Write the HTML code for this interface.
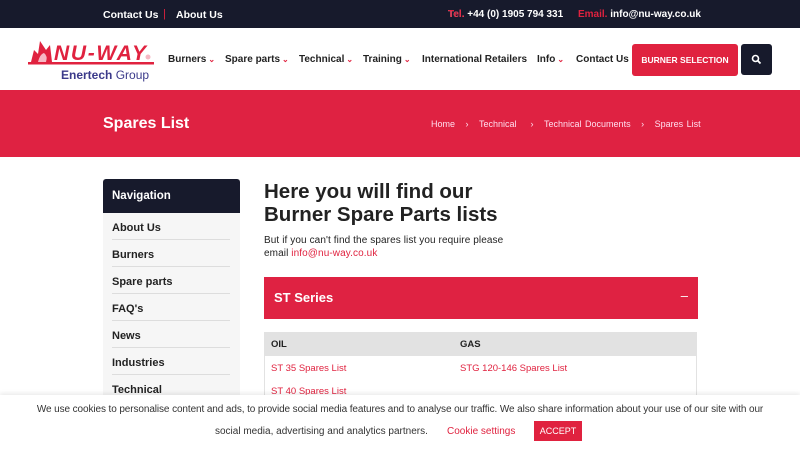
<!DOCTYPE html>
<html><head><meta charset="utf-8"><style>
*{margin:0;padding:0;box-sizing:border-box}
body{width:800px;height:450px;overflow:hidden;font-family:"Liberation Sans",Arial,sans-serif;background:#fff;position:relative;color:#222}
.a{position:absolute;white-space:nowrap}
.top{left:0;top:0;width:800px;height:28px;background:#171a2c}
.w{color:#fff;font-weight:bold;font-size:10.5px}
.r{color:#e0223f}
.nav{font-weight:bold;font-size:10px;color:#222;top:54px}
.nav i{color:#e0223f;font-style:normal;font-size:8px;margin-left:2px}
.ban{left:0;top:90px;width:800px;height:67px;background:#df2242}
.side{left:103px;top:179px;width:137px;height:230px;background:#f6f6f6}
.side .h{position:absolute;left:0;top:0;width:137px;height:34px;background:#171a2c;border-radius:3px 3px 0 0;color:#fff;font-weight:bold;font-size:11.5px;padding:11px 9px}
.it{position:absolute;left:9px;width:118px;height:27px;border-bottom:1px solid #ddd;font-weight:bold;font-size:11px;padding-top:9px}
.lnk{color:#e0223f;font-size:9.5px}
</style></head><body>
<div class="a top"></div>
<div class="a w" style="left:103px;top:9px">Contact Us</div>
<div class="a r" style="left:163px;top:8px;font-size:11px">|</div>
<div class="a w" style="left:176px;top:9px">About Us</div>
<div class="a w" style="left:448px;top:9px;font-size:10px">Tel. <span style="color:#fff"></span></div>
<div class="a w" style="left:448px;top:9px;font-size:10px"><span class="r">Tel.</span> +44 (0) 1905 794 331</div>
<div class="a w" style="left:578px;top:9px;font-size:10px"><span class="r">Email.</span> info@nu-way.co.uk</div>

<svg class="a" style="left:26px;top:36px" width="130" height="46" viewBox="0 0 130 46">
<path d="M5 26 L8 14 L12 18 L14 5 L20 14 L24 9 L26 26 Z" fill="#e0223f"/>
<path d="M12 26 Q14 18 18 17 Q22 20 20 26 Z" fill="#f6b8c4"/>
<rect x="2" y="26" width="126" height="2.5" fill="#e0223f"/>
<text x="28" y="24" font-family="Liberation Sans" font-weight="bold" font-style="italic" font-size="21" fill="#e0223f" textLength="92">NU-WAY</text>
<circle cx="122" cy="21" r="2.5" fill="#f6b8c4"/>
<text x="35" y="43" font-family="Liberation Sans" font-size="12" fill="#3b3a8a"><tspan font-weight="bold">Enertech</tspan> Group</text>
</svg>

<div class="a nav" style="left:168px">Burners<i>⌄</i></div>
<div class="a nav" style="left:225px">Spare parts<i>⌄</i></div>
<div class="a nav" style="left:299px">Technical<i>⌄</i></div>
<div class="a nav" style="left:363px">Training<i>⌄</i></div>
<div class="a nav" style="left:422px">International Retailers</div>
<div class="a nav" style="left:537px">Info<i>⌄</i></div>
<div class="a nav" style="left:576px">Contact Us</div>
<div class="a" style="left:632px;top:44px;width:106px;height:32px;background:#e0223f;border-radius:3px;color:#fff;font-weight:bold;font-size:8.5px;text-align:center;line-height:32px">BURNER SELECTION</div>
<div class="a" style="left:741px;top:44px;width:31px;height:31px;background:#171a2c;border-radius:3px"></div>
<svg class="a" style="left:751px;top:54px" width="11" height="11" viewBox="0 0 11 11"><circle cx="4.5" cy="4.5" r="3" stroke="#fff" stroke-width="1.6" fill="none"/><path d="M6.8 6.8 L9.5 9.5" stroke="#fff" stroke-width="1.8"/></svg>

<div class="a ban"></div>
<div class="a" style="left:103px;top:115px;color:#fff;font-weight:bold;font-size:16px">Spares List</div>
<div class="a" style="left:431px;top:119px;color:#fde;font-size:9px;word-spacing:1px">Home &nbsp;&nbsp;› &nbsp;&nbsp;Technical &nbsp;&nbsp;&nbsp;› &nbsp;&nbsp;Technical Documents &nbsp;&nbsp;› &nbsp;&nbsp;Spares List</div>

<div class="a side"><div class="h">Navigation</div>
<div class="it" style="top:34px">About Us</div>
<div class="it" style="top:61px">Burners</div>
<div class="it" style="top:88px">Spare parts</div>
<div class="it" style="top:115px">FAQ's</div>
<div class="it" style="top:142px">News</div>
<div class="it" style="top:169px">Industries</div>
<div class="it" style="top:196px;border:none">Technical</div>
</div>

<div class="a" style="left:264px;top:180px;font-weight:bold;font-size:20.5px;line-height:23px;color:#222">Here you will find our<br>Burner Spare Parts lists</div>
<div class="a" style="left:264px;top:234px;font-size:10px;line-height:13px;color:#222;letter-spacing:0.1px">But if you can't find the spares list you require please<br>email <span class="r">info@nu-way.co.uk</span></div>
<div class="a" style="left:264px;top:277px;width:434px;height:42px;background:#df2242;color:#fff;font-weight:bold;font-size:13px;padding:13px 10px">ST Series<span style="position:absolute;right:10px;top:11px;font-weight:normal">–</span></div>
<div class="a" style="left:264px;top:332px;width:433px;height:80px;border:1px solid #e2e2e2;background:#fff"></div>
<div class="a" style="left:264px;top:332px;width:433px;height:24px;background:#e2e2e2"></div>
<div class="a" style="left:271px;top:339px;font-weight:bold;font-size:9.5px">OIL</div>
<div class="a" style="left:460px;top:339px;font-weight:bold;font-size:9.5px">GAS</div>
<div class="a lnk" style="left:271px;top:363px">ST 35 Spares List</div>
<div class="a lnk" style="left:460px;top:363px">STG 120-146 Spares List</div>
<div class="a lnk" style="left:271px;top:386px">ST 40 Spares List</div>

<div class="a" style="left:0;top:395px;width:800px;height:55px;background:#fff;box-shadow:0 -2px 4px rgba(0,0,0,.08)"></div>
<div class="a" style="left:0;top:404px;width:800px;text-align:center;font-size:10px;color:#333;letter-spacing:-0.1px">We use cookies to personalise content and ads, to provide social media features and to analyse our traffic. We also share information about your use of our site with our</div>
<div class="a" style="left:215px;top:426px;font-size:10px;color:#333">social media, advertising and analytics partners.</div>
<div class="a r" style="left:447px;top:426px;font-size:10px">Cookie settings</div>
<div class="a" style="left:534px;top:421px;width:48px;height:20px;background:#e0223f;color:#fff;font-size:9px;text-align:center;line-height:20px">ACCEPT</div>
</body></html>
